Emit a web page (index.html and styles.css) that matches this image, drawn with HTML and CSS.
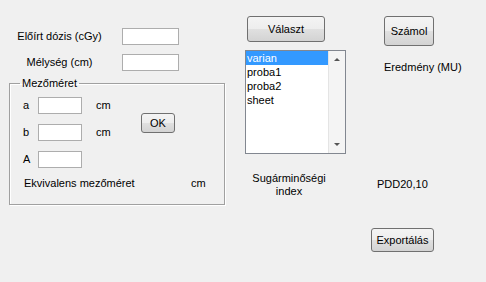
FILE: index.html
```html
<!DOCTYPE html>
<html>
	<head>
		<title>MU számolás</title>
		<link rel="stylesheet" href="styles.css">
	</head>
	<body>
		<div class="figure">
			<div class="col-left">
				<div class="field-row">
					<label class="field-label" for="dose">Előírt dózis (cGy)</label>
					<input class="edit" type="text" id="dose" />
				</div>
				<div class="field-row">
					<label class="field-label" for="depth">Mélység (cm)</label>
					<input class="edit" type="text" id="depth" />
				</div>
				<fieldset class="group">
					<legend>Mezőméret</legend>
					<div class="size-grid">
						<span>a</span>
						<input class="edit" type="text" />
						<span class="unit">cm</span>
						<button class="btn btn-ok">OK</button>
						<span>b</span>
						<input class="edit" type="text" />
						<span class="unit">cm</span>
						<span>A</span>
						<input class="edit" type="text" />
					</div>
					<div class="equiv-row">
						<span>Ekvivalens mezőméret</span>
						<span>cm</span>
					</div>
				</fieldset>
			</div>

			<div class="col-mid">
				<button class="btn btn-select">Választ</button>
				<div class="listbox">
					<ul class="list-items">
						<li class="selected">varian</li>
						<li>proba1</li>
						<li>proba2</li>
						<li>sheet</li>
					</ul>
					<div class="scrollbar">
						<span class="arrow arrow-up"></span>
						<span class="arrow arrow-down"></span>
					</div>
				</div>
				<div class="quality-label">Sugárminőségi index</div>
			</div>

			<div class="col-right">
				<button class="btn btn-calc">Számol</button>
				<div class="result-label">Eredmény (MU)</div>
				<div class="pdd-label">PDD20,10</div>
				<button class="btn btn-export">Exportálás</button>
			</div>
		</div>
	</body>
</html>
```

FILE: styles.css
```css
body {
	margin: 0;
	width: 486px;
	height: 282px;
	overflow: hidden;
	background-color: #f0f0f0;
	font-family: "Liberation Sans", Arial, sans-serif;
	font-size: 11px;
	line-height: 13px;
	color: #000;
}
.figure {
	display: flex;
	align-items: flex-start;
	padding-left: 9px;
}

/* gombok */
.btn {
	box-sizing: border-box;
	margin: 0;
	padding: 0;
	border: 1px solid #707070;
	border-radius: 3px;
	background: linear-gradient(#f4f4f4 0%, #ededed 50%, #e0e0e0 51%, #d3d3d3 100%);
	font: inherit;
	color: #000;
	text-align: center;
}

/* bal oszlop */
.col-left {
	width: 216px;
	padding-top: 28px;
}
.field-row {
	display: grid;
	grid-template-columns: 101px 57px;
	column-gap: 12px;
	align-items: center;
	height: 17px;
}
.field-row + .field-row {
	margin-top: 9px;
}
.field-label {
	text-align: center;
}
.edit {
	box-sizing: border-box;
	width: 100%;
	height: 17px;
	margin: 0;
	padding: 0 2px;
	border: 1px solid #adadad;
	background-color: #fff;
	font: inherit;
}
.group {
	margin: 6px 0 0;
	padding: 7px 0 14px;
	border: 1px solid #a0a0a0;
	box-shadow: inset 1px 1px 0 #fff, 1px 1px 0 #fff;
}
.group legend {
	margin-left: 10px;
	padding: 0 2px;
}
.size-grid {
	display: grid;
	grid-template-columns: 15px 44px 59px 34px;
	grid-template-rows: 17px 17px 17px;
	row-gap: 10px;
	align-items: center;
	padding-left: 13px;
}
.unit {
	padding-left: 14px;
}
.btn-ok {
	grid-column: 4;
	grid-row: 1 / span 2;
	align-self: start;
	margin-top: 16px;
	width: 34px;
	height: 20px;
}
.equiv-row {
	display: grid;
	grid-template-columns: 167px auto;
	margin-top: 9px;
	padding-left: 14px;
}

/* középső oszlop */
.col-mid {
	width: 101px;
	margin-left: 20px;
	padding-top: 16px;
}
.btn-select {
	display: block;
	width: 78px;
	height: 26px;
	margin-left: 2px;
}
.listbox {
	box-sizing: border-box;
	display: grid;
	grid-template-columns: 1fr 17px;
	height: 104px;
	margin-top: 8px;
	border: 1px solid #828790;
	background-color: #fff;
}
.list-items {
	margin: 0;
	padding: 0;
	list-style: none;
}
.list-items li {
	height: 14px;
	line-height: 14px;
	padding-left: 1px;
}
.list-items .selected {
	background-color: #3399ff;
	color: #fff;
}
.scrollbar {
	display: flex;
	flex-direction: column;
	justify-content: space-between;
	align-items: center;
	padding: 7px 0;
	background-color: #f4f4f4;
	border-left: 1px solid #e4e4e4;
}
.arrow {
	width: 0;
	height: 0;
	border-left: 3px solid transparent;
	border-right: 3px solid transparent;
}
.arrow-up {
	border-bottom: 3px solid #555;
}
.arrow-down {
	border-top: 3px solid #555;
}
.quality-label {
	width: 88px;
	margin-top: 18px;
	text-align: center;
}

/* jobb oszlop */
.col-right {
	margin-left: 24px;
	padding-top: 16px;
}
.btn-calc {
	display: block;
	width: 50px;
	height: 30px;
	margin-left: 14px;
}
.result-label {
	margin-top: 15px;
	padding-left: 14px;
}
.pdd-label {
	margin-top: 104px;
	padding-left: 7px;
}
.btn-export {
	display: block;
	width: 63px;
	height: 24px;
	margin-top: 37px;
	margin-left: 1px;
}
```
